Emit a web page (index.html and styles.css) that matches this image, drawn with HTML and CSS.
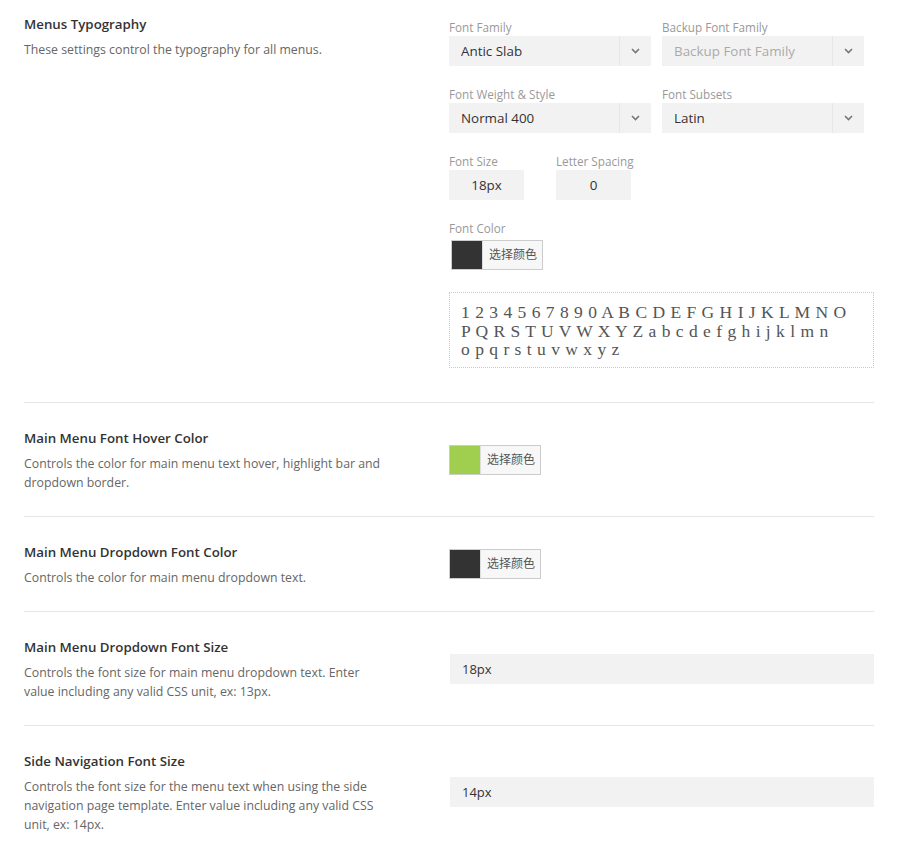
FILE: index.html
```html
<!DOCTYPE html>
<html lang="en">
<head>
    <meta charset="UTF-8">
    <meta name="viewport" content="width=device-width, initial-scale=1.0">
    <title>Menu Options</title>
    <link rel="stylesheet" href="styles.css">
</head>
<body>
    <div class="options">
        <!-- Menus Typography -->
        <div class="option option-top">
            <div class="option-info">
                <h3>Menus Typography</h3>
                <p>These settings control the typography for all menus.</p>
            </div>
            <div class="option-field">
                <div class="field-row">
                    <div class="field">
                        <label>Font Family</label>
                        <div class="select">
                            <span class="select-value">Antic Slab</span>
                            <span class="select-arrow"><svg width="9" height="6" viewBox="0 0 9 6"><path d="M1 1l3.5 3.5L8 1" fill="none" stroke="#777" stroke-width="1.6"/></svg></span>
                        </div>
                    </div>
                    <div class="field">
                        <label>Backup Font Family</label>
                        <div class="select">
                            <span class="select-value placeholder">Backup Font Family</span>
                            <span class="select-arrow"><svg width="9" height="6" viewBox="0 0 9 6"><path d="M1 1l3.5 3.5L8 1" fill="none" stroke="#777" stroke-width="1.6"/></svg></span>
                        </div>
                    </div>
                </div>
                <div class="field-row">
                    <div class="field">
                        <label>Font Weight &amp; Style</label>
                        <div class="select">
                            <span class="select-value">Normal 400</span>
                            <span class="select-arrow"><svg width="9" height="6" viewBox="0 0 9 6"><path d="M1 1l3.5 3.5L8 1" fill="none" stroke="#777" stroke-width="1.6"/></svg></span>
                        </div>
                    </div>
                    <div class="field">
                        <label>Font Subsets</label>
                        <div class="select">
                            <span class="select-value">Latin</span>
                            <span class="select-arrow"><svg width="9" height="6" viewBox="0 0 9 6"><path d="M1 1l3.5 3.5L8 1" fill="none" stroke="#777" stroke-width="1.6"/></svg></span>
                        </div>
                    </div>
                </div>
                <div class="field-row small-row">
                    <div class="field">
                        <label>Font Size</label>
                        <div class="small-input">18px</div>
                    </div>
                    <div class="field">
                        <label>Letter Spacing</label>
                        <div class="small-input">0</div>
                    </div>
                </div>
                <div class="field-row last-row">
                    <div class="field">
                        <label>Font Color</label>
                        <div class="color-btn color-btn-inset">
                            <span class="swatch swatch-dark"></span>
                            <span class="color-text">选择颜色</span>
                        </div>
                    </div>
                </div>
                <div class="preview">
                    1 2 3 4 5 6 7 8 9 0 A B C D E F G H I J K L M N O<br>
                    P Q R S T U V W X Y Z a b c d e f g h i j k l m n<br>
                    o p q r s t u v w x y z
                </div>
            </div>
        </div>

        <!-- Hover color -->
        <div class="option">
            <div class="option-info">
                <h3>Main Menu Font Hover Color</h3>
                <p>Controls the color for main menu text hover, highlight bar and dropdown border.</p>
            </div>
            <div class="option-field">
                <div class="color-btn">
                    <span class="swatch swatch-green"></span>
                    <span class="color-text">选择颜色</span>
                </div>
            </div>
        </div>

        <!-- Dropdown color -->
        <div class="option">
            <div class="option-info">
                <h3>Main Menu Dropdown Font Color</h3>
                <p>Controls the color for main menu dropdown text.</p>
            </div>
            <div class="option-field">
                <div class="color-btn">
                    <span class="swatch swatch-dark"></span>
                    <span class="color-text">选择颜色</span>
                </div>
            </div>
        </div>

        <!-- Dropdown size -->
        <div class="option">
            <div class="option-info">
                <h3>Main Menu Dropdown Font Size</h3>
                <p>Controls the font size for main menu dropdown text. Enter value including any valid CSS unit, ex: 13px.</p>
            </div>
            <div class="option-field">
                <div class="text-input">18px</div>
            </div>
        </div>

        <!-- Side nav size -->
        <div class="option">
            <div class="option-info">
                <h3>Side Navigation Font Size</h3>
                <p>Controls the font size for the menu text when using the side navigation page template. Enter value including any valid CSS unit, ex: 14px.</p>
            </div>
            <div class="option-field">
                <div class="text-input">14px</div>
            </div>
        </div>
    </div>
</body>
</html>
```

FILE: styles.css
```css
body {
    font-family: "Segoe UI", "Open Sans", "Noto Sans CJK SC", sans-serif;
    margin: 0;
    padding: 0;
    background-color: #fff;
    color: #333;
}

.options {
    width: 850px;
    margin-left: 24px;
}

.option {
    display: grid;
    grid-template-columns: 425px 425px;
    align-items: center;
    padding: 25px 0 24px;
    border-top: 1px solid #e5e5e5;
}

.option-top {
    align-items: start;
    padding: 14px 0 34px;
    border-top: none;
}

.option-info {
    padding-right: 60px;
}

.option-info h3 {
    margin: 0;
    font-size: 13.3px;
    font-weight: 600;
    line-height: 20px;
    color: #333;
}

.option-info p {
    margin: 6px 0 0;
    font-size: 12.3px;
    line-height: 19px;
    color: #666;
}

/* Typography fields */
.field-row {
    display: flex;
    gap: 11px;
    margin-bottom: 19px;
}

.field-row.last-row {
    margin-bottom: 0;
}

.option-top .option-field {
    padding-top: 4px;
}

.small-row {
    gap: 32px;
}

.field label {
    display: block;
    font-size: 11.7px;
    line-height: 18px;
    color: #999;
}

.select {
    display: flex;
    width: 202px;
    height: 30px;
    background-color: #f3f2f2;
}

.select-value {
    flex: 1;
    padding-left: 12px;
    font-size: 13.4px;
    line-height: 30px;
    color: #333;
}

.select-value.placeholder {
    color: #aaa;
}

.select-arrow {
    width: 31px;
    display: flex;
    align-items: center;
    justify-content: center;
    border-left: 1px solid #e8e7e7;
}

.small-input {
    width: 75px;
    height: 30px;
    background-color: #f3f2f2;
    text-align: center;
    font-size: 13.4px;
    line-height: 30px;
    color: #333;
}

/* Color picker button */
.color-btn {
    display: flex;
    width: max-content;
    height: 28px;
    border: 1px solid #ccc;
    background-color: #f7f7f7;
}

.color-btn-inset {
    margin: 3px 0 0 2px;
}

.swatch {
    width: 30px;
    height: 28px;
    border-right: 1px solid #ddd;
}

.swatch-dark {
    background-color: #333;
}

.swatch-green {
    background-color: #a0ce4e;
}

.color-text {
    padding: 0 5px 0 6px;
    font-size: 12px;
    line-height: 28px;
    color: #555;
}

/* Font preview */
.preview {
    margin-top: 22px;
    padding: 10px 11px 8px;
    border: 1px dotted #ccc;
    font-family: "Liberation Serif", serif;
    font-size: 17.5px;
    line-height: 18.5px;
    letter-spacing: 0.5px;
    color: #555;
    white-space: nowrap;
}

.text-input {
    height: 30px;
    margin-left: 1px;
    padding-left: 12px;
    background-color: #f3f2f2;
    font-size: 13px;
    line-height: 30px;
    color: #333;
}
```
